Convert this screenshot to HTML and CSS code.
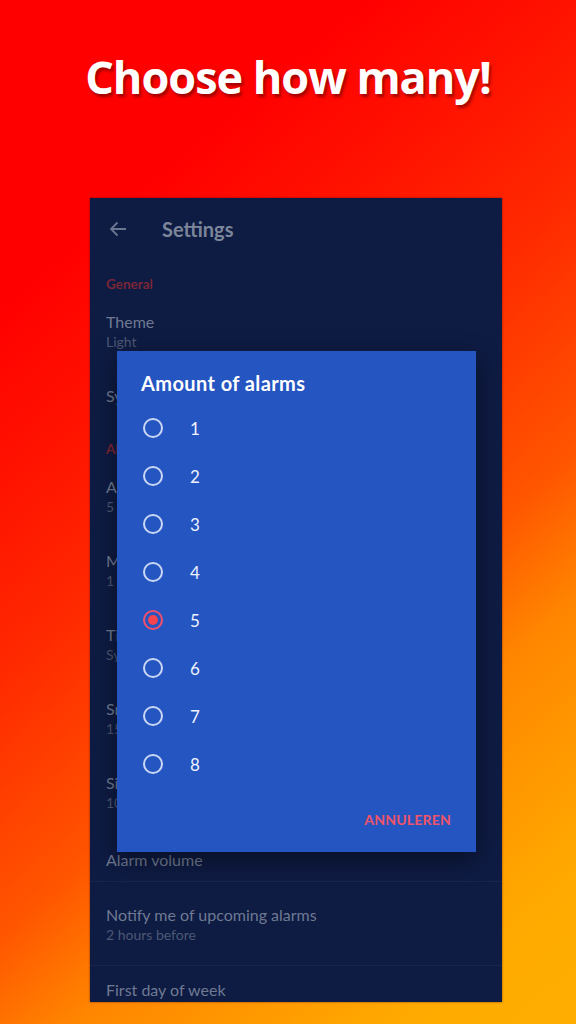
FILE: index.html
```html
<!DOCTYPE html>
<html>
<head>
<meta charset="utf-8">
<link rel="stylesheet" href="styles.css">
</head>
<body>
<div class="page">
  <h1 class="headline">Choose how many!</h1>
  <div class="phone">
    <div class="toolbar">
      <svg class="back" width="18" height="16" viewBox="0 0 18 16"><path d="M17 8H2M8.5 1.5L2 8l6.5 6.5" fill="none" stroke="currentColor" stroke-width="1.8"/></svg>
      <span class="toolbar-title">Settings</span>
    </div>
    <div class="section">General</div>
    <div class="row"><div class="t">Theme</div><div class="s">Light</div></div>
    <div class="row"><div class="t">Sync with system theme</div></div>
    <div class="section">Alarms</div>
    <div class="row"><div class="t">Amount of alarms</div><div class="s">5</div></div>
    <div class="row"><div class="t">Maximum snoozes</div><div class="s">1 time</div></div>
    <div class="row"><div class="t">Time format</div><div class="s">System default</div></div>
    <div class="row"><div class="t">Snooze duration</div><div class="s">15 minutes</div></div>
    <div class="row"><div class="t">Silence after</div><div class="s">10 minutes</div></div>
    <div class="row single volume"><div class="t">Alarm volume</div></div>
    <div class="row notify"><div class="t">Notify me of upcoming alarms</div><div class="s">2 hours before</div></div>
    <div class="row first"><div class="t">First day of week</div></div>

    <div class="dialog">
      <div class="dialog-title">Amount of alarms</div>
      <div class="options">
        <div class="opt"><span class="radio"></span><span class="num">1</span></div>
        <div class="opt"><span class="radio"></span><span class="num">2</span></div>
        <div class="opt"><span class="radio"></span><span class="num">3</span></div>
        <div class="opt"><span class="radio"></span><span class="num">4</span></div>
        <div class="opt"><span class="radio on"></span><span class="num">5</span></div>
        <div class="opt"><span class="radio"></span><span class="num">6</span></div>
        <div class="opt"><span class="radio"></span><span class="num">7</span></div>
        <div class="opt"><span class="radio"></span><span class="num">8</span></div>
      </div>
      <div class="actions"><span class="cancel">ANNULEREN</span></div>
    </div>
  </div>
</div>
</body>
</html>
```
FILE: styles.css
```css
html, body {
  margin: 0;
  padding: 0;
}
body {
  width: 576px;
  height: 1024px;
  overflow: hidden;
  background: linear-gradient(140deg, #ff0000 20%, #ff1400 33%, #ff2a00 45%, #ff5500 62%, #ff8600 72%, #ffaa00 90%, #ffae00 100%);
  font-family: Lato, "Noto Sans", sans-serif;
}
.page {
  width: 576px;
  height: 1024px;
  display: flex;
  flex-direction: column;
  align-items: flex-start;
}
.headline {
  align-self: stretch;
  margin: 49px 0 0 0;
  height: 56px;
  line-height: 56px;
  text-align: center;
  font-family: "Open Sans", sans-serif;
  font-weight: 700;
  font-size: 45px;
  letter-spacing: -1px;
  color: #ffffff;
  text-shadow: 2px 3px 3px rgba(90, 0, 0, 0.55);
}
.phone {
  position: relative;
  margin: 93px 0 0 90px;
  width: 412px;
  height: 804px;
  overflow: hidden;
  background: #0e1b43;
  box-shadow: 0 0 2px rgba(60, 0, 0, 0.6);
}
.toolbar {
  height: 62px;
  display: flex;
  align-items: center;
  color: #7c869a;
}
.back {
  margin-left: 19px;
  color: #6a7590;
}
.toolbar-title {
  margin-left: 35px;
  font-weight: 700;
  font-size: 20px;
}
.section {
  padding: 16px 16px 7px;
  line-height: 16px;
  font-size: 13.5px;
  font-weight: 700;
  color: #7b2637;
}
.row {
  padding: 14px 16px 20px;
}
.row .t {
  line-height: 18px;
  font-size: 16px;
  color: #6f7a92;
  white-space: nowrap;
}
.row .s {
  line-height: 22px;
  font-size: 14px;
  color: #4c5874;
  white-space: nowrap;
}
.row.volume {
  padding: 17px 16px 12px;
  border-bottom: 1px solid #17244c;
}
.row.notify {
  padding: 24px 16px 19px;
  border-bottom: 1px solid #17244c;
}
.row.first {
  padding-top: 15px;
}
.dialog {
  position: absolute;
  left: 27px;
  top: 153px;
  width: 359px;
  height: 501px;
  background: #2455c1;
  box-shadow: 0 8px 24px rgba(0, 0, 0, 0.45);
  display: flex;
  flex-direction: column;
}
.dialog-title {
  padding: 22px 24px 11px;
  line-height: 20px;
  font-size: 20px;
  font-weight: 700;
  letter-spacing: 0.4px;
  color: #ffffff;
}
.options {
  display: flex;
  flex-direction: column;
}
.opt {
  height: 48px;
  display: flex;
  align-items: center;
}
.radio {
  margin-left: 26px;
  width: 16px;
  height: 16px;
  border: 2px solid #c9d7f3;
  border-radius: 50%;
  display: flex;
  align-items: center;
  justify-content: center;
}
.radio.on {
  border-color: #f0506a;
}
.radio.on::after {
  content: "";
  width: 10px;
  height: 10px;
  border-radius: 50%;
  background: #f5444f;
}
.num {
  margin-left: 27px;
  font-size: 17px;
  color: #eef3ff;
}
.actions {
  margin-top: 24px;
  padding: 0 25px 0 0;
  display: flex;
  justify-content: flex-end;
}
.cancel {
  line-height: 16px;
  font-size: 14px;
  font-weight: 700;
  letter-spacing: 0.2px;
  color: #ef5468;
}
```
